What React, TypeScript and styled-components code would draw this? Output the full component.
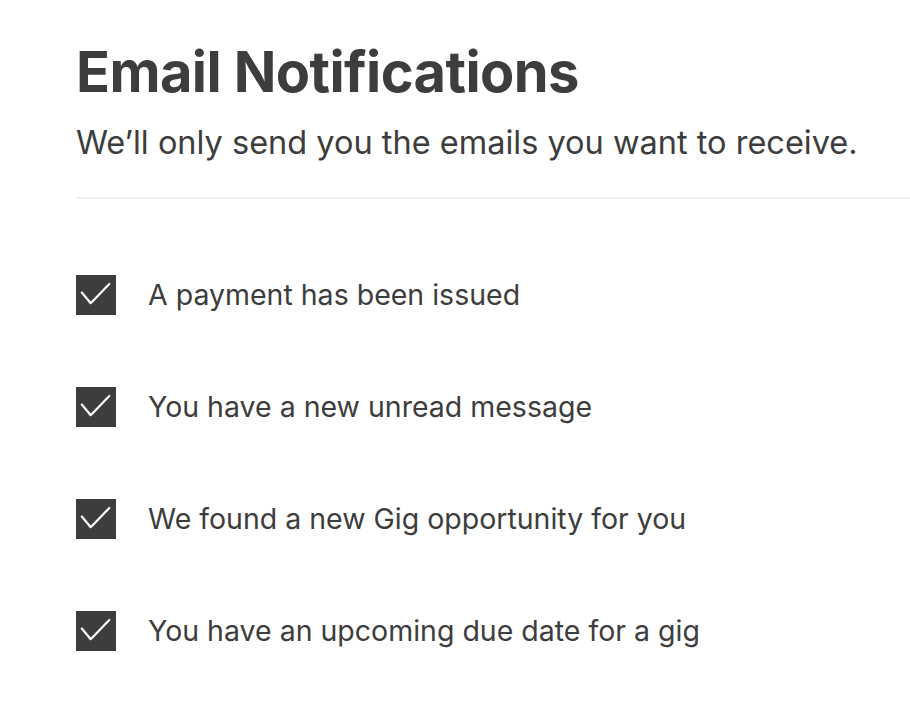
import React from 'react';
import styled, { createGlobalStyle } from 'styled-components';

const GlobalStyle = createGlobalStyle`
  html, body {
    margin: 0;
    padding: 0;
    background: #ffffff;
  }
  body {
    font-family: Inter, "Open Sans", "Liberation Sans", sans-serif;
    color: #3d3d3d;
  }
`;

const Page = styled.div`
  width: 910px;
  height: 726px;
  overflow: hidden;
  padding: 38px 0 0 76px;
  box-sizing: border-box;
`;

const Header = styled.header`
  display: flex;
  flex-direction: column;
  border-bottom: 2px solid #f0f0f0;
  padding-bottom: 34px;
`;

const Title = styled.h1`
  margin: 0;
  font-size: 56px;
  line-height: 68px;
  font-weight: 700;
  letter-spacing: -0.6px;
  color: #3d3d3d;
`;

const Subtitle = styled.p`
  margin: 17px 0 0;
  font-size: 32.5px;
  line-height: 40px;
  font-weight: 400;
  color: #3d3d3d;
`;

const List = styled.ul`
  list-style: none;
  margin: 0;
  padding: 76px 0 0;
  display: flex;
  flex-direction: column;
  gap: 72px;
`;

const Row = styled.li`
  display: flex;
  align-items: center;
  gap: 32px;
  height: 40px;
`;

const Box = styled.span<{ $checked: boolean }>`
  flex: none;
  width: 40px;
  height: 40px;
  background: ${p => (p.$checked ? '#3d3d3d' : '#ffffff')};
  border: ${p => (p.$checked ? 'none' : '2px solid #3d3d3d')};
  box-sizing: border-box;
  display: flex;
  align-items: center;
  justify-content: center;
`;

const Label = styled.span`
  font-size: 28.5px;
  line-height: 40px;
  color: #3d3d3d;
`;

const Check = () => (
  <svg width="40" height="40" viewBox="0 0 40 40" fill="none">
    <path d="M5.8 17.5 L14.7 28.2 L33.3 9" stroke="#ffffff" strokeWidth="2.2" strokeLinecap="round" strokeLinejoin="round" />
  </svg>
);

const items = [
  'A payment has been issued',
  'You have a new unread message',
  'We found a new Gig opportunity for you',
  'You have an upcoming due date for a gig',
];

export default function App() {
  return (
    <>
      <GlobalStyle />
      <Page>
        <Header>
          <Title>Email Notifications</Title>
          <Subtitle>We’ll only send you the emails you want to receive.</Subtitle>
        </Header>
        <List>
          {items.map(text => (
            <Row key={text}>
              <Box $checked>{<Check />}</Box>
              <Label>{text}</Label>
            </Row>
          ))}
        </List>
      </Page>
    </>
  );
}
